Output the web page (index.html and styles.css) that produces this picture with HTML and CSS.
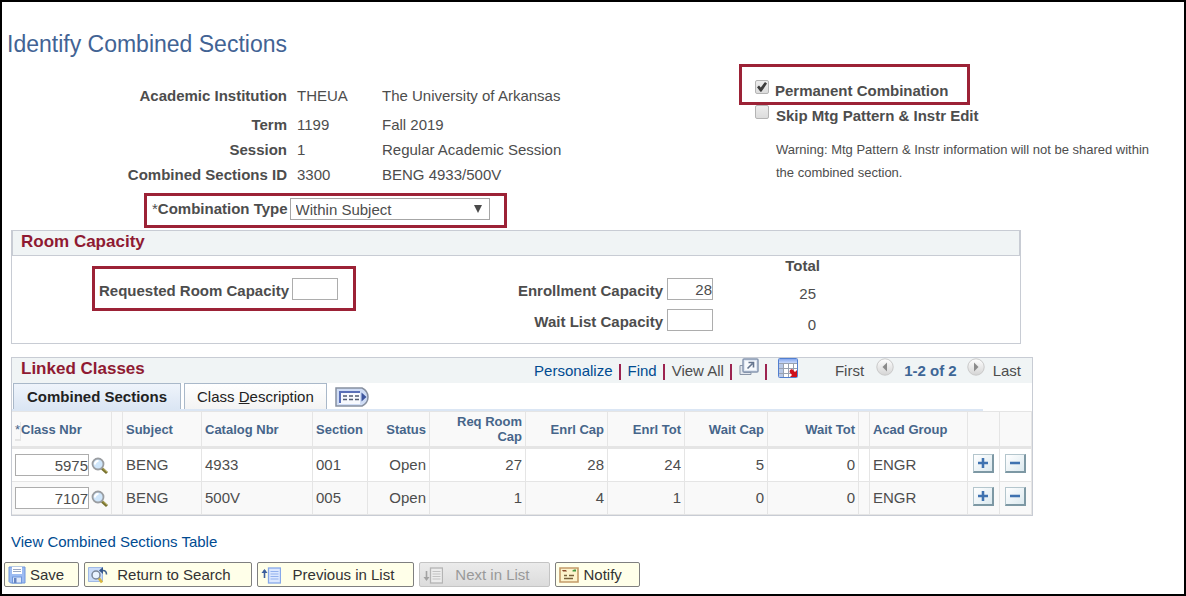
FILE: index.html
```html
<!DOCTYPE html>
<html lang="en">
<head>
<meta charset="utf-8">
<title>Identify Combined Sections</title>
<link rel="stylesheet" href="styles.css">
</head>
<body>
<svg class="defs" width="0" height="0" aria-hidden="true">
  <defs>
    <linearGradient id="silver" x1="0" y1="0" x2="0" y2="1"><stop offset="0" stop-color="#ffffff"/><stop offset="1" stop-color="#d4d4d4"/></linearGradient>
    <linearGradient id="grid-head" x1="0" y1="0" x2="0" y2="1"><stop offset="0" stop-color="#86a8ee"/><stop offset="1" stop-color="#c9d9fa"/></linearGradient>
    <symbol id="lens" viewBox="0 0 18 18">
      <path d="M11 11.500l5 4.500" stroke="#77712f" stroke-width="3"/>
      <path d="M11.500 11l4.500 4" stroke="#b9b05a" stroke-width="1"/>
      <circle cx="7" cy="7" r="5.500" fill="#cfe6fb" stroke="#9a9da1" stroke-width="1.800"/>
      <path d="M4 7.500a3.200 3.200 0 0 1 3.500-3.500" stroke="#fff" stroke-width="2" fill="none"/>
    </symbol>
    <symbol id="plus" viewBox="0 0 11 11"><path d="M5.500 0v11M0 5.500h11" stroke="#3f72b0" stroke-width="2.800"/></symbol>
    <symbol id="minus" viewBox="0 0 11 11"><path d="M0 5.500h11" stroke="#3f72b0" stroke-width="2.800"/></symbol>
  </defs>
</svg>
<main class="page">
  <h1 class="title">Identify Combined Sections</h1>

  <section class="overview">
    <div class="details">
      <dl class="facts">
        <div class="fact fact-first"><dt>Academic Institution</dt><dd>THEUA</dd><dd>The University of Arkansas</dd></div>
        <div class="fact"><dt>Term</dt><dd>1199</dd><dd>Fall 2019</dd></div>
        <div class="fact"><dt>Session</dt><dd>1</dd><dd>Regular Academic Session</dd></div>
        <div class="fact"><dt>Combined Sections ID</dt><dd>3300</dd><dd>BENG 4933/500V</dd></div>
      </dl>
      <div class="callout combo">
        <label for="combo-type"><span class="required">*</span>Combination Type</label>
        <span class="select-wrap">
          <select id="combo-type" class="select"><option>Within Subject</option></select>
          <svg class="caret" width="8" height="8" viewBox="0 0 8 8" aria-hidden="true"><path d="M0 0h8L4 8z" fill="#4a4a4a"/></svg>
        </span>
      </div>
    </div>
    <div class="options">
      <div class="callout option permanent">
        <input type="checkbox" id="permanent" class="check" checked>
        <label for="permanent">Permanent Combination</label>
      </div>
      <div class="option skip">
        <input type="checkbox" id="skip" class="check">
        <label for="skip">Skip Mtg Pattern &amp; Instr Edit</label>
      </div>
      <p class="warning">Warning: Mtg Pattern &amp; Instr information will not be shared within the combined section.</p>
    </div>
  </section>

  <section class="room">
    <h2 class="bar room-bar">Room Capacity</h2>
    <div class="room-body">
      <div class="callout requested">
        <label for="requested">Requested Room Capacity</label>
        <input type="text" id="requested" class="field field-num">
      </div>
      <div class="capacity">
        <span class="total-head">Total</span>
        <label for="enrollment">Enrollment Capacity</label>
        <input type="text" id="enrollment" class="field field-num" value="28">
        <span class="total">25</span>
        <label for="waitlist">Wait List Capacity</label>
        <input type="text" id="waitlist" class="field field-num">
        <span class="total">0</span>
      </div>
    </div>
  </section>

  <section class="linked">
    <header class="bar linked-bar">
      <h2 class="bar-title">Linked Classes</h2>
      <nav class="tools">
        <a href="#">Personalize</a><span class="sep"></span>
        <a href="#">Find</a><span class="sep"></span>
        <span>View All</span><span class="sep"></span>
        <a href="#" class="tool-icon" aria-label="Open in new window"><svg width="20" height="18" viewBox="0 0 20 18"><path d="M1 7.500h4v7h7v2H1z" fill="#e3e8ef" stroke="#8995a7"/><rect x="4" y="1" width="15" height="13" rx="1" fill="#dfe7f2" stroke="#8797b0" stroke-width="1.500"/><rect x="6" y="3" width="11" height="9" fill="#f7fafd"/><path d="M8.500 10.500l5-5M9.500 4.500h5v5" stroke="#65758e" stroke-width="1.600" fill="none"/></svg></a><span class="sep"></span>
        <a href="#" class="tool-icon grid-icon" aria-label="Download"><svg width="20" height="20" viewBox="0 0 20 20"><rect x=".5" y=".5" width="19" height="19" rx="1" fill="#fff" stroke="#527fd0"/><rect x="1" y="1" width="18" height="4" fill="url(#grid-head)"/><path d="M1 5h4v14H1z" fill="#b8c8e6"/><path d="M1 5.500h18M1 10.500h18M1 15.500h18M5.500 5v14M10.500 5v14M15.500 5v14" stroke="#98a1b0"/><path d="M12 12l2-1 3 3 2-2v7h-7l2-2-2.500-3z" fill="#cf101c"/></svg></a>
        <span>First</span>
        <button type="button" class="pager pager-prev" aria-label="Previous"><svg width="18" height="18" viewBox="0 0 18 18"><circle cx="9" cy="9" r="8.200" fill="url(#silver)" stroke="#c9c9c9"/><path d="M11 4.500v9L6.500 9z" fill="#8b8b8b"/></svg></button>
        <strong class="range">1-2 of 2</strong>
        <button type="button" class="pager pager-next" aria-label="Next"><svg width="18" height="18" viewBox="0 0 18 18"><circle cx="9" cy="9" r="8.200" fill="url(#silver)" stroke="#c9c9c9"/><path d="M7 4.500v9L11.500 9z" fill="#8b8b8b"/></svg></button>
        <span>Last</span>
      </nav>
    </header>
    <div class="tabs">
      <button type="button" class="tab tab-active">Combined Sections</button>
      <button type="button" class="tab">Class <u>D</u>escription</button>
      <button type="button" class="tab-all" aria-label="Show all columns"><svg width="34" height="20" viewBox="0 0 34 20"><path d="M1 1h26q6 3 6 9t-6 9H1z" fill="#cfdcf5" stroke="#8790a0" stroke-width="1.500"/><path d="M4 4h21v13H4z" fill="#f7f9fe"/><path d="M4 5h21M5 4v12" stroke="#5a70b8" stroke-width="2"/><path d="M8 9h4m2 0h4m2 0h4M8 12.500h4m2 0h4m2 0h4" stroke="#515b70" stroke-width="1.300"/><path d="M26.500 5.500v9L31.500 10z" fill="#3d559d"/></svg></button>
    </div>
    <table class="grid">
      <colgroup><col class="c-nbr"><col class="c-gap"><col class="c-subject"><col class="c-catalog"><col class="c-section"><col class="c-status"><col class="c-req"><col class="c-ecap"><col class="c-etot"><col class="c-wcap"><col class="c-wtot"><col class="c-gap"><col class="c-group"><col class="c-act"><col class="c-act"></colgroup>
      <thead>
        <tr><th class="nbr"><span class="star">*</span>Class Nbr</th><th></th><th>Subject</th><th>Catalog Nbr</th><th>Section</th><th class="num">Status</th><th class="num">Req Room Cap</th><th class="num">Enrl Cap</th><th class="num">Enrl Tot</th><th class="num">Wait Cap</th><th class="num">Wait Tot</th><th></th><th>Acad Group</th><th></th><th></th></tr>
      </thead>
      <tbody>
        <tr><td class="nbr"><div class="lookup"><input type="text" class="field" value="5975" aria-label="Class number, row 1"><button type="button" class="lens" aria-label="Look up class 5975"><svg width="18" height="18"><use href="#lens"/></svg></button></div></td><td></td><td>BENG</td><td>4933</td><td>001</td><td class="num">Open</td><td class="num">27</td><td class="num">28</td><td class="num">24</td><td class="num">5</td><td class="num">0</td><td></td><td>ENGR</td><td class="act"><button type="button" class="step" aria-label="Add row"><svg width="10" height="10"><use href="#plus"/></svg></button></td><td class="act"><button type="button" class="step" aria-label="Delete row"><svg width="10" height="10"><use href="#minus"/></svg></button></td></tr>
        <tr><td class="nbr"><div class="lookup"><input type="text" class="field" value="7107" aria-label="Class number, row 2"><button type="button" class="lens" aria-label="Look up class 7107"><svg width="18" height="18"><use href="#lens"/></svg></button></div></td><td></td><td>BENG</td><td>500V</td><td>005</td><td class="num">Open</td><td class="num">1</td><td class="num">4</td><td class="num">1</td><td class="num">0</td><td class="num">0</td><td></td><td>ENGR</td><td class="act"><button type="button" class="step" aria-label="Add row"><svg width="10" height="10"><use href="#plus"/></svg></button></td><td class="act"><button type="button" class="step" aria-label="Delete row"><svg width="10" height="10"><use href="#minus"/></svg></button></td></tr>
      </tbody>
    </table>
  </section>

  <a href="#" class="view-link">View Combined Sections Table</a>

  <footer class="actions">
    <button type="button" class="btn"><svg width="18" height="18" viewBox="0 0 18 18"><path d="M1 1h16v16H2.500L1 15.500z" fill="#9dbcf2" stroke="#7197dc"/><rect x="4" y="1" width="10" height="7" fill="#fff"/><path d="M5 3.500h8M5 5.500h8" stroke="#9aa9c4"/><rect x="4.500" y="11" width="9" height="6" fill="#dfe9fa" stroke="#7197dc"/><path d="M6 12h2.500v5H6z" fill="#6685c2"/></svg>Save</button>
    <button type="button" class="btn btn-return"><svg width="20" height="18" viewBox="0 0 20 18"><path d="M.5 1.500h14v14H.5z" fill="#c9dbf8" stroke="#9fb9e6"/><path d="M10 11l4 5.500" stroke="#d8b63c" stroke-width="2.800"/><circle cx="8" cy="9" r="4" fill="#e9f3ff" stroke="#7a8799" stroke-width="1.500"/><path d="M13.500 4.500h1.500q3.500 0 3.500 4" stroke="#41628f" stroke-width="1.600" fill="none"/><path d="M15 1v7l-4-3.500z" fill="#35568a"/></svg>Return to Search</button>
    <button type="button" class="btn btn-nav"><svg width="20" height="18" viewBox="0 0 20 18"><path d="M3.500 4v8" stroke="#3c5f9d" stroke-width="1.600"/><path d="M.5 7l3-4 3 4z" fill="#3c5f9d"/><rect x="7.500" y="2" width="12" height="15" fill="#dce8ff" stroke="#86a8ea" stroke-width="1.300"/><path d="M9.500 5.500h8M9.500 8h8M9.500 10.500h8M9.500 13h8" stroke="#93b1ee"/></svg>Previous in List</button>
    <button type="button" class="btn btn-nav" disabled><svg width="20" height="18" viewBox="0 0 20 18"><path d="M3.500 5v8" stroke="#a2a2a2" stroke-width="1.600"/><path d="M.5 11l3 4 3-4z" fill="#a2a2a2"/><rect x="7.500" y="2" width="12" height="15" fill="#ececec" stroke="#b4b4b4" stroke-width="1.300"/><path d="M9.500 5.500h8M9.500 8h8M9.500 10.500h8M9.500 13h8" stroke="#c2c2c2"/></svg>Next in List</button>
    <button type="button" class="btn btn-notify"><svg width="20" height="18" viewBox="0 0 20 18"><path d="M1 2h18v14H1z" fill="#fdf3cc" stroke="#c49a68" stroke-width="1.600"/><path d="M3 4h4l1 1.500H4z" fill="#8a4a2d"/><path d="M13 5l2-1.500h2v2h-3z" fill="#3f963f"/><path d="M5 9.500h3M10 9.500h5M5 12.500h9" stroke="#77603b" stroke-width="1.300" fill="none"/></svg>Notify</button>
  </footer>
</main>
</body>
</html>
```

FILE: styles.css
```css
* { box-sizing: border-box; }

body {
  margin: 0;
  color: #4d4d4d;
  background: #fff;
  font: 15px/20px "Liberation Sans", Arial, sans-serif;
}

.defs { position: absolute; }

.page {
  min-height: 100vh;
  padding: 28px 0 7px;
  border: 2px solid #000;
}

h1, h2, p, dl, dd { margin: 0; }
a { color: #004b91; text-decoration: none; }
label, dt { font-weight: bold; }
svg { display: block; }
button, input, select { font: inherit; color: inherit; }
button { padding: 0; border: 0; background: none; }

.title {
  margin: 0 5px 6px;
  color: #426394;
  font-size: 23px;
  font-weight: normal;
  line-height: 28px;
}

/* Overview */
.overview {
  display: grid;
  grid-template-columns: minmax(0, 737fr) minmax(0, 445fr);
}

.details { padding-top: 19px; }
.fact {
  display: grid;
  grid-template-columns: 285px 75px 1fr;
  column-gap: 10px;
  line-height: 25px;
}
.fact-first { margin-bottom: 4px; }
.fact dt { text-align: right; }

.callout { border: 3px solid #9c2236; }

.combo {
  display: flex;
  gap: 2px;
  width: 363px;
  margin: 6px 0 0 142px;
  padding: 2px 5px 5px;
  line-height: 22px;
}
.required { font-weight: normal; }
.select-wrap { position: relative; width: 200px; }
.select {
  display: block;
  width: 100%;
  height: 22px;
  padding: 0 5px;
  border: 1px solid #a6a6a6;
  border-radius: 0;
  background: #fff;
  appearance: none;
}
.caret {
  position: absolute;
  top: 7px;
  right: 8px;
  pointer-events: none;
}

.option {
  display: flex;
  align-items: flex-start;
  gap: 6px;
  line-height: 21px;
}
.permanent {
  width: 231px;
  padding: 13px 13px 1px;
}
.skip { padding-left: 16px; gap: 7px; }
.check {
  display: grid;
  place-items: center;
  width: 14px;
  height: 14px;
  margin: 0;
  border: 1px solid #b4b4b4;
  border-radius: 2px;
  background: linear-gradient(#ededed, #dcdcdc);
  appearance: none;
}
.check:checked::before {
  content: "";
  width: 10px;
  height: 10px;
  background: #3c3c3c;
  clip-path: polygon(0 52%, 20% 34%, 38% 54%, 80% 0, 100% 16%, 44% 98%, 34% 98%);
}
.warning {
  padding: 12px 16px 0 37px;
  font-size: 13px;
  line-height: 23px;
}

/* Group bars */
.bar {
  background: #f0f4f5;
  color: #8f1a32;
  font-size: 17px;
  line-height: 22px;
}

/* Room capacity */
.room {
  margin: 2px 163px 13px 9px;
  border: 1px solid #c8ccd4;
}
.room-bar {
  padding: 0 8px 2px;
  border: solid #c8ccd4;
  border-width: 0 1px 1px;
}
.room-body {
  display: flex;
  align-items: flex-start;
  padding-bottom: 12px;
}
.requested {
  display: flex;
  gap: 3px;
  width: 264px;
  margin: 10px 0 0 80px;
  padding: 9px 4px 7px;
}
.requested label { padding-top: 3px; }
.capacity {
  display: grid;
  grid-template-columns: 307px 46px 103px;
  grid-template-rows: 13px 22px 22px;
  gap: 9px 4px;
}
.total-head {
  grid-column: 3;
  font-weight: bold;
  text-align: right;
}
.capacity label { padding-top: 3px; text-align: right; }
.total { padding: 6px 4px 0 0; text-align: right; }

.field {
  width: 74px;
  height: 22px;
  padding: 0;
  border: 1px solid #adadad;
  border-radius: 0;
  background: #fff;
  text-align: right;
}
.field-num { width: 46px; }

/* Linked classes */
.linked {
  margin: 0 151px 0 9px;
  border: 1px solid #c8ccd4;
}
.linked-bar {
  display: flex;
  justify-content: space-between;
  padding: 0 11px 3px 9px;
}
.bar-title { font-size: 17px; line-height: 22px; }
.tools {
  display: flex;
  align-items: flex-start;
  height: 22px;
  color: #4d4d4d;
  font-size: 15px;
  line-height: 25px;
}
.sep {
  width: 2px;
  height: 16px;
  margin: 6px 7px 0 6px;
  background: #9c2350;
}
.grid-icon { margin: 0 37px 0 4px; }
.pager-prev { margin: 0 10px 0 12px; }
.pager-next { margin: 0 8px 0 10px; }
.range { color: #3e6696; }

.tabs {
  display: flex;
  align-items: flex-end;
  height: 28px;
  margin-right: 49px;
  padding-left: 1px;
  border-bottom: 2px solid #dbe6f4;
}
.tab {
  height: 26px;
  margin-right: 3px;
  padding: 0 12px;
  border: solid #a9b8c9;
  border-width: 1px 1px 0;
  background: linear-gradient(#fff, #f3f3f3);
  color: #222;
}
.tab-active {
  padding: 0 13px;
  background: linear-gradient(#eff4fb, #dbe6f4);
  font-weight: bold;
}
.tab-all { margin: 0 0 2px 5px; }

.c-nbr { width: 100px; }
.c-gap { width: 11px; }
.c-subject { width: 79px; }
.c-catalog { width: 111px; }
.c-section { width: 55px; }
.c-status { width: 62px; }
.c-req { width: 96px; }
.c-ecap { width: 82px; }
.c-etot { width: 77px; }
.c-wcap { width: 83px; }
.c-wtot { width: 91px; }
.c-group { width: 98px; }
.c-act { width: 32px; }

.grid {
  width: 100%;
  border-collapse: separate;
  border-spacing: 0;
  table-layout: fixed;
}
.grid th {
  height: 38px;
  padding: 0 3px;
  border: solid #e5e5e5;
  border-width: 1px 1px 3px 0;
  background: #f9f9f9;
  color: #46658a;
  font-size: 13px;
  line-height: 15px;
  text-align: left;
}
.grid td {
  height: 33px;
  padding: 0 3px;
  border: solid #e5e5e5;
  border-width: 0 1px 1px 0;
}
.grid tbody tr:nth-child(even) { background: #f9f9f9; }
.grid .num { text-align: right; }
.grid .act { padding: 0 0 4px 5px; }
.star {
  padding-bottom: 2px;
  border: solid #e5e5e5;
  border-width: 0 1px 2px 0;
  font-weight: normal;
}
.lookup { display: flex; align-items: center; gap: 2px; }
.lens { padding-top: 2px; }
.step {
  display: grid;
  place-items: center;
  width: 21px;
  height: 19px;
  border: solid;
  border-color: #b4c6cd #7d98a4 #7d98a4 #b4c6cd;
  border-width: 1px 2px 2px 1px;
  background: linear-gradient(135deg, #fff, #dce9ef);
}

/* Footer */
.view-link {
  display: inline-block;
  margin: 16px 9px 10px;
}
.actions {
  display: flex;
  flex-wrap: wrap;
  gap: 5px;
  padding-left: 2px;
}
.btn {
  display: flex;
  align-items: center;
  gap: 4px;
  height: 25px;
  padding: 0 14px 0 3px;
  border: 1px solid #7f7f7f;
  border-radius: 2px;
  background: #ffffe9;
  color: #333;
}
.btn-return { gap: 9px; padding-right: 20px; }
.btn-nav { gap: 12px; padding-right: 19px; }
.btn-notify { gap: 5px; padding-right: 17px; }
.btn:disabled {
  border-color: #c4c4c4;
  background: linear-gradient(#ebebeb, #dcdcdc);
  color: #999;
}
```
